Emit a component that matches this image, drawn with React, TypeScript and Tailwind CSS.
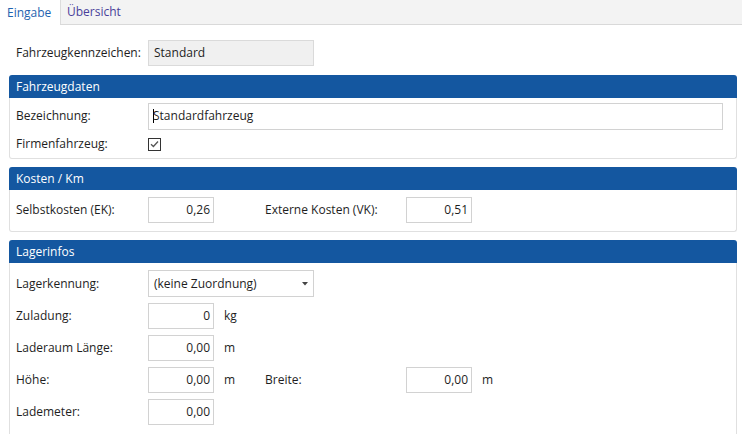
import React from "react";

const FONT = { fontFamily: '"Open Sans", "Noto Sans", "Liberation Sans", sans-serif' };

function Header({ title }: { title: string }) {
  return (
    <div className="h-[23px] rounded-t-[3px] bg-[#1457a0] pl-[7px] flex items-center text-[12px] text-white">
      {title}
    </div>
  );
}

function Field({ value, w = "w-[66px]" }: { value: string; w?: string }) {
  return (
    <div
      className={`${w} h-[26px] border border-[#d2d2d2] bg-white flex items-center justify-end pr-[3px] text-[12px] text-[#1e1e1e]`}
    >
      {value}
    </div>
  );
}

function Row({ label, children }: { label: string; children: React.ReactNode }) {
  return (
    <div className="flex items-center h-[26px]">
      <div className="w-[132px] shrink-0 text-[12px] text-[#1e1e1e]">{label}</div>
      {children}
    </div>
  );
}

function Unit({ text }: { text: string }) {
  return <span className="ml-[10px] text-[12px] text-[#1e1e1e]">{text}</span>;
}

export default function App() {
  return (
    <div className="w-[742px] h-[434px] overflow-hidden bg-white" style={FONT}>
      {/* Tabs */}
      <div className="flex h-[25px] bg-[#f3f3f3] border-b border-[#d9d9d9]">
        <div className="w-[60px] h-[25px] bg-white flex items-center pl-[7px] text-[12px] text-[#1f63b0]">
          Eingabe
        </div>
        <div className="h-[24px] border-l border-[#dcdcdc] flex items-center pl-[6px] pr-[8px] text-[12px] text-[#4a3f9a]">
          Übersicht
        </div>
      </div>

      {/* Kennzeichen */}
      <div className="pl-[16px] pt-[15px]">
        <div className="flex items-center h-[26px]">
          <div className="w-[132px] shrink-0 text-[12px] text-[#1e1e1e]">Fahrzeugkennzeichen:</div>
          <div className="w-[166px] h-[26px] border border-[#dadada] bg-[#f0f0f0] flex items-center pl-[5px] text-[12px] text-[#1e1e1e]">
            Standard
          </div>
        </div>
      </div>

      <div className="ml-[9px] mr-[5px] mt-[9px] flex flex-col gap-[8px]">
        {/* Fahrzeugdaten */}
        <div>
          <Header title="Fahrzeugdaten" />
          <div className="border border-t-0 border-[#e0e0e0] rounded-b-[3px] pl-[6px] pr-[13px] pt-[5px] pb-[3px]">
            <Row label="Bezeichnung:">
              <div className="flex-1 h-[27px] border border-[#d2d2d2] bg-white flex items-center pl-[4px] text-[12px] text-[#1e1e1e]">
                <span className="w-px h-[14px] bg-black mr-[-1px]" />
                Standardfahrzeug
              </div>
            </Row>
            <div className="flex items-center h-[22px] mt-[4px]">
              <div className="w-[132px] shrink-0 text-[12px] text-[#1e1e1e]">Firmenfahrzeug:</div>
              <div className="w-[13px] h-[13px] border border-[#333] bg-white flex items-center justify-center">
                <svg width="9" height="8" viewBox="0 0 9 8" fill="none">
                  <path d="M1 4.2 L3.4 6.5 L8 1.5" stroke="#555" strokeWidth="1.3" />
                </svg>
              </div>
            </div>
          </div>
        </div>

        {/* Kosten */}
        <div>
          <Header title="Kosten / Km" />
          <div className="border border-t-0 border-[#e0e0e0] rounded-b-[3px] pl-[6px] pt-[7px] pb-[8px]">
            <div className="flex items-center h-[26px]">
              <div className="w-[132px] shrink-0 text-[12px] text-[#1e1e1e]">Selbstkosten (EK):</div>
              <Field value="0,26" />
              <div className="ml-[51px] w-[141px] text-[12px] text-[#1e1e1e]">Externe Kosten (VK):</div>
              <Field value="0,51" />
            </div>
          </div>
        </div>

        {/* Lagerinfos */}
        <div>
          <Header title="Lagerinfos" />
          <div className="border border-t-0 border-[#e0e0e0] pl-[6px] pt-[7px] pb-[20px] flex flex-col gap-[6px]">
            <div className="flex items-center h-[27px]">
              <div className="w-[132px] shrink-0 text-[12px] text-[#1e1e1e]">Lagerkennung:</div>
              <div className="w-[166px] h-[27px] border border-[#d2d2d2] bg-white flex items-center pl-[5px] pr-[5px] text-[12px] text-[#1e1e1e]">
                <span className="flex-1">(keine Zuordnung)</span>
                <svg width="6" height="4" viewBox="0 0 6 4">
                  <path d="M0 0 H6 L3 3.5 Z" fill="#444" />
                </svg>
              </div>
            </div>
            <Row label="Zuladung:">
              <Field value="0" />
              <Unit text="kg" />
            </Row>
            <Row label="Laderaum Länge:">
              <Field value="0,00" />
              <Unit text="m" />
            </Row>
            <div className="flex items-center h-[26px]">
              <div className="w-[132px] shrink-0 text-[12px] text-[#1e1e1e]">Höhe:</div>
              <Field value="0,00" />
              <span className="ml-[10px] w-[41px] text-[12px] text-[#1e1e1e]">m</span>
              <div className="w-[141px] text-[12px] text-[#1e1e1e]">Breite:</div>
              <Field value="0,00" />
              <Unit text="m" />
            </div>
            <Row label="Lademeter:">
              <Field value="0,00" />
            </Row>
          </div>
        </div>
      </div>
    </div>
  );
}
